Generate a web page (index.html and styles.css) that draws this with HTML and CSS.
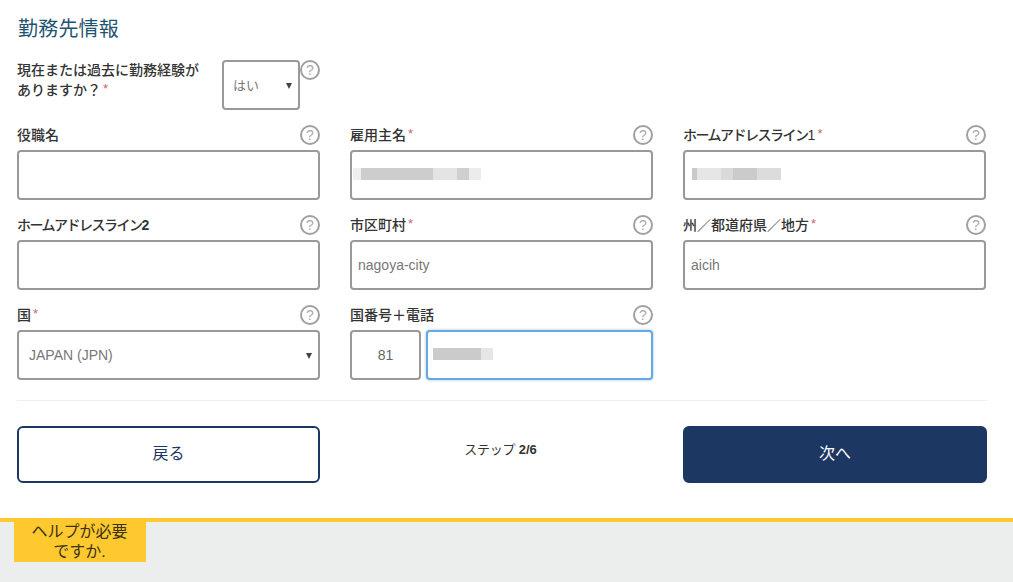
FILE: index.html
```html
<!DOCTYPE html>
<html lang="ja">
<head>
<meta charset="utf-8">
<title>勤務先情報</title>
<link rel="stylesheet" href="styles.css">
</head>
<body>
<main class="page">
  <h1 class="title">勤務先情報</h1>
  <div class="experience">
    <label class="experience-label">現在または過去に勤務経験が<br>ありますか？<span class="req">*</span></label>
    <div class="select-wrap select-small">
      <select class="control"><option>はい</option></select>
    </div>
    <span class="help">?</span>
  </div>
  <div class="grid">
    <div class="cell">
      <div class="label-row"><label>役職名</label><span class="help">?</span></div>
      <input class="control" type="text">
    </div>
    <div class="cell">
      <div class="label-row"><label>雇用主名<span class="req">*</span></label><span class="help">?</span></div>
      <div class="control masked"><span class="mosaic mosaic-employer"></span></div>
    </div>
    <div class="cell">
      <div class="label-row"><label><span class="kana">ホームアドレスライン</span>1<span class="req">*</span></label><span class="help">?</span></div>
      <div class="control masked"><span class="mosaic mosaic-address"></span></div>
    </div>
    <div class="cell">
      <div class="label-row"><label><span class="kana">ホームアドレスライン</span><b>2</b></label><span class="help">?</span></div>
      <input class="control" type="text">
    </div>
    <div class="cell">
      <div class="label-row"><label>市区町村<span class="req">*</span></label><span class="help">?</span></div>
      <input class="control" type="text" value="nagoya-city">
    </div>
    <div class="cell">
      <div class="label-row"><label>州／都道府県／地方<span class="req">*</span></label><span class="help">?</span></div>
      <input class="control" type="text" value="aicih">
    </div>
    <div class="cell">
      <div class="label-row"><label>国<span class="req">*</span></label><span class="help">?</span></div>
      <div class="select-wrap">
        <select class="control country"><option>JAPAN (JPN)</option></select>
      </div>
    </div>
    <div class="cell">
      <div class="label-row"><label>国番号＋電話</label><span class="help">?</span></div>
      <div class="phone">
        <input class="control code" type="text" value="81">
        <div class="control masked focused"><span class="mosaic mosaic-phone"></span></div>
      </div>
    </div>
  </div>
  <hr class="divider">
  <div class="actions">
    <button class="btn btn-back" type="button">戻る</button>
    <div class="step"><span class="step-word">ステップ</span> <b>2/6</b></div>
    <button class="btn btn-next" type="button">次へ</button>
  </div>
</main>
<footer class="footer">
  <div class="help-tab">ヘルプが必要<br>ですか.</div>
</footer>
</body>
</html>
```
FILE: styles.css
```css
* { box-sizing: border-box; }
html, body { margin: 0; padding: 0; }
body {
  background: #fff;
  color: #333;
  font-family: "Liberation Sans", "Noto Sans CJK JP", sans-serif;
  font-size: 14px;
  overflow: hidden;
}
.page {
  height: 518px;
  padding: 0 26px 0 17px;
}
.title {
  margin: 0;
  height: 60px;
  padding: 15px 0 0 1px;
  font-size: 20px;
  line-height: 28px;
  font-weight: 400;
  letter-spacing: 0.2px;
  color: #1f5470;
}
.experience {
  display: flex;
  align-items: flex-start;
  height: 50px;
  margin-bottom: 15px;
}
.experience-label {
  display: block;
  width: 205px;
  height: 50px;
  line-height: 20px;
  font-weight: 500;
  font-size: 14px;
  color: #333;
}
.select-small { width: 78px; }
.select-small .control { padding-left: 9px; font-size: 13px; }
.grid {
  display: grid;
  grid-template-columns: repeat(3, 303px);
  column-gap: 30px;
  row-gap: 15px;
}
.label-row {
  display: flex;
  justify-content: space-between;
  align-items: flex-start;
  height: 25px;
  font-weight: 500;
  line-height: 20px;
}
.kana { letter-spacing: -1.5px; }
.req {
  color: #c8656e;
  font-weight: 400;
  font-size: 13px;
  margin-left: 2px;
  position: relative;
  top: -2px;
}
.help {
  flex: none;
  width: 20px;
  height: 20px;
  border: 2px solid #a0a0a0;
  border-radius: 50%;
  background: #fff;
  color: #aaa;
  font-size: 14px;
  line-height: 16px;
  text-align: center;
}
.control {
  display: block;
  width: 100%;
  height: 50px;
  margin: 0;
  border: 2px solid #999;
  border-radius: 4px;
  background: #fff;
  padding: 0 6px;
  font-family: "Liberation Sans", "Noto Sans CJK JP", sans-serif;
  font-size: 14px;
  color: #777;
  outline: none;
  appearance: none;
}
.masked {
  display: flex;
  align-items: center;
}
.mosaic {
  display: block;
  height: 12px;
  margin-bottom: 2px;
  filter: blur(0.6px);
}
.mosaic-employer {
  width: 128px;
  margin-left: -5px;
  background: linear-gradient(90deg, #efefef 0 8px, #cdcdcd 8px 80px, #e4e4e4 80px 104px, #cfcfcf 104px 116px, #ececec 116px);
}
.mosaic-address {
  width: 89px;
  margin-left: 1px;
  background: linear-gradient(90deg, #c9c9c9 0 5px, #e6e6e6 5px 29px, #dadada 29px 41px, #cbcbcb 41px 65px, #dcdcdc 65px);
}
.mosaic-phone {
  width: 60px;
  margin-left: -1px;
  background: linear-gradient(90deg, #cbcbcb 0 48px, #e6e6e6 48px);
}
.select-wrap { position: relative; }
.select-wrap::after {
  content: "";
  position: absolute;
  right: 8px;
  top: 23px;
  border-left: 3px solid transparent;
  border-right: 3px solid transparent;
  border-top: 6px solid #444;
  pointer-events: none;
}
.country { padding-left: 10px; }
.phone {
  display: flex;
  gap: 5px;
}
.code {
  flex: none;
  width: 71px;
  text-align: center;
  color: #666;
}
.focused {
  flex: 1;
  border-color: #66a9de;
  box-shadow: 0 0 3px rgba(102, 169, 222, 0.7);
}
.divider {
  margin: 20px 0 25px;
  height: 1px;
  border: 0;
  background: #eee;
}
.actions {
  display: grid;
  grid-template-columns: 303px 303px 304px;
  column-gap: 30px;
  align-items: start;
}
.btn {
  height: 57px;
  padding: 0 0 5px;
  border-radius: 6px;
  font-family: "Liberation Sans", "Noto Sans CJK JP", sans-serif;
  font-size: 16px;
  cursor: pointer;
}
.btn-back {
  background: #fff;
  border: 2px solid #1d3763;
  color: #1d3763;
}
.btn-next {
  background: #1d3763;
  border: 2px solid #1d3763;
  color: #fff;
}
.step {
  padding: 14px 2px 0 0;
  line-height: 20px;
  text-align: center;
  font-size: 13px;
  color: #333;
}
.step-word { letter-spacing: -0.25px; }
.footer {
  height: 64px;
  border-top: 4px solid #fdc92f;
  background: #eceeee;
}
.help-tab {
  width: 132px;
  height: 40px;
  margin-left: 14px;
  padding-right: 1px;
  background: #fdc92f;
  color: #3d3216;
  font-size: 16px;
  line-height: 20px;
  text-align: center;
}
```
